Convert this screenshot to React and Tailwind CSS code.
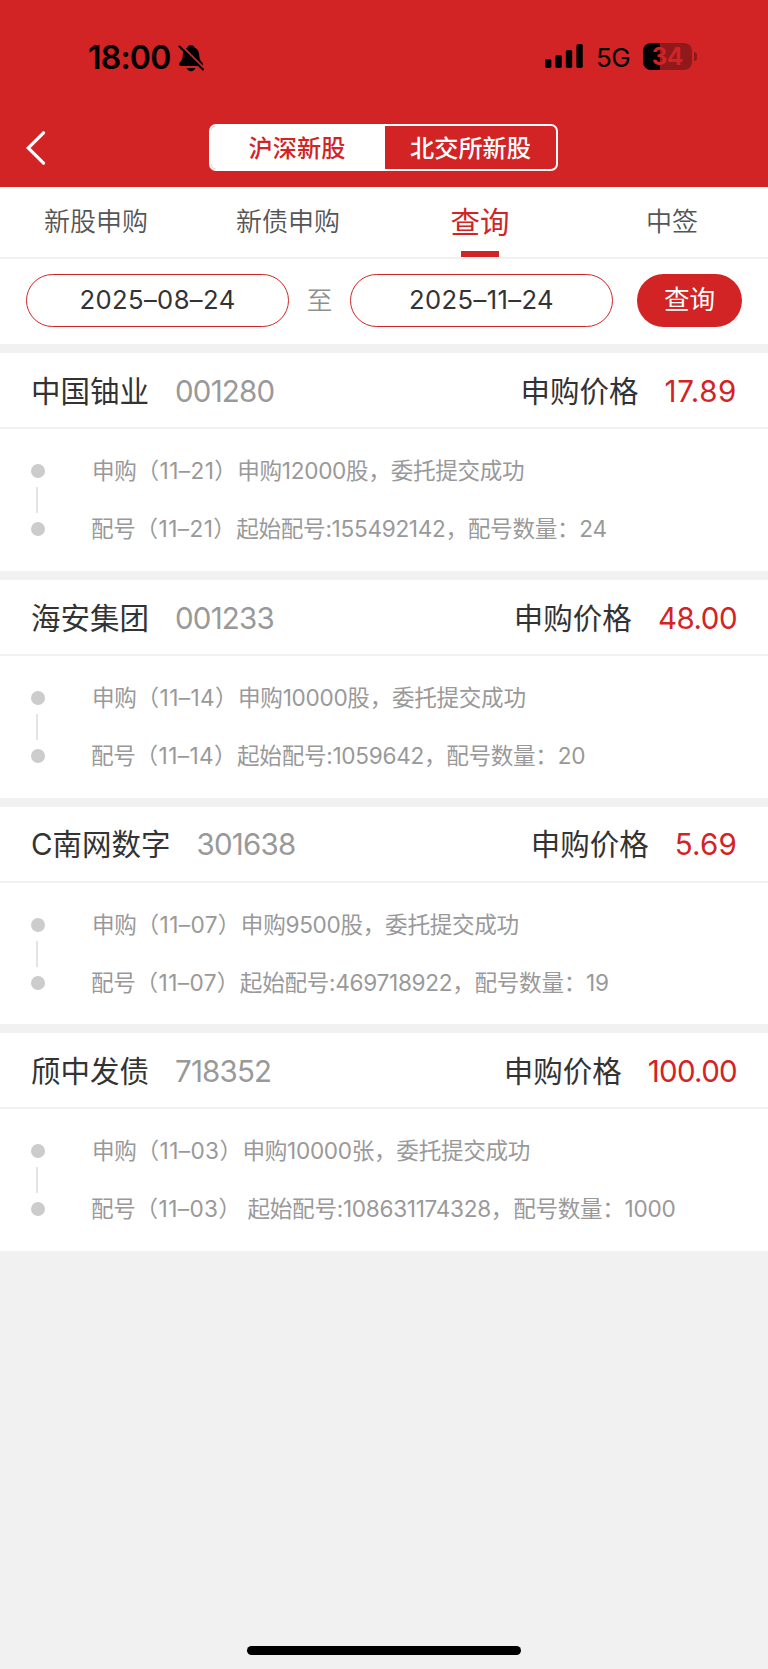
import React from 'react';

const tabs = ['新股申购', '新债申购', '查询', '中签'];

const records = [
  {
    name: '中国铀业',
    code: '001280',
    price: '17.89',
    priceSpacing: 'tracking-[0.6px]',
    date: '（11–21）',
    apply: '申购12000股，委托提交成功',
    allot: '起始配号:155492142，配号数量：24',
  },
  {
    name: '海安集团',
    code: '001233',
    price: '48.00',
    priceSpacing: 'tracking-[-0.5px]',
    date: '（11–14）',
    apply: '申购10000股，委托提交成功',
    allot: '起始配号:1059642，配号数量：20',
  },
  {
    name: 'C南网数字',
    code: '301638',
    price: '5.69',
    priceSpacing: 'tracking-[0.2px]',
    date: '（11–07）',
    apply: '申购9500股，委托提交成功',
    allot: '起始配号:469718922，配号数量：19',
  },
  {
    name: '颀中发债',
    code: '718352',
    price: '100.00',
    priceSpacing: 'tracking-[-0.7px]',
    date: '（11–03）',
    apply: '申购10000张，委托提交成功',
    allot: ' 起始配号:108631174328，配号数量：1000',
  },
];

const StatusBar = () => (
  <div className="flex h-[112px] items-center justify-between pl-[88px] pr-[71px] text-black">
    <div className="flex items-center gap-[8px] pt-[3px]">
      <span className="text-[32px] leading-none font-semibold tracking-[-0.8px]">18:00</span>
      <svg width="26" height="28" viewBox="0 0 26 28">
        <path d="M13 1c-1.800 0-3.100 1-3.500 2.500C6.200 4.800 5 7.600 4.800 11c-.2 4-1 5.500-3 7.600C.5 20 .9 22 2.800 22h20.400c1.900 0 2.300-2 1-3.400-2-2.100-2.800-3.600-3-7.600-.2-3.400-1.400-6.200-4.700-7.500C16.100 2 14.800 1 13 1z" />
        <path d="M8.600 24h8.800c-.6 2-2.300 3.200-4.400 3.200S9.200 26 8.600 24z" />
        <path d="M2.500.8l24 24" stroke="#d22325" strokeWidth="2.200" />
        <path d="M1.500 2.500l23.500 23" stroke="black" strokeWidth="2" strokeLinecap="round" />
      </svg>
    </div>
    <div className="flex items-center">
      <svg width="38" height="24" viewBox="0 0 38 24">
        <rect x="0" y="15" width="6.400" height="9" rx="1.800" />
        <rect x="10.400" y="11" width="6.400" height="13" rx="1.800" />
        <rect x="20.800" y="6" width="6.400" height="18" rx="1.800" />
        <rect x="31.400" y="0" width="6.400" height="24" rx="1.800" />
      </svg>
      <span className="ml-[13px] w-[47px] pt-[3px] text-[26px] leading-none tracking-[-0.6px]">5G</span>
      <div className="flex h-[27px] w-[49px] items-center justify-center rounded-[8px] bg-[linear-gradient(90deg,#000_17px,#8f191b_17px)]">
        <span className="pt-px text-[24px] leading-none font-bold text-[#d22325]">34</span>
      </div>
      <div className="ml-[2px] h-[9px] w-[3px] rounded-r-full bg-[#8f191b]" />
    </div>
  </div>
);

const NavBar = () => (
  <div className="flex h-[75px] items-start pt-[12px]">
    <button className="ml-[26px] flex h-[47px] w-[183px] items-center">
      <svg width="20" height="34" viewBox="0 0 20 34" fill="none" stroke="white" strokeWidth="3.200" strokeLinecap="round">
        <path d="M17.500 1.800L2.200 17l15.300 15.200" />
      </svg>
    </button>
    <div className="flex h-[47px] w-[349px] overflow-hidden rounded-[7px] border-2 border-white text-[24.2px] font-medium">
      <button className="w-[174px] bg-white pt-[4px] pr-[2px] text-[#d22325]">沪深新股</button>
      <button className="flex-1 pt-[4px] text-white">北交所新股</button>
    </div>
  </div>
);

const Record = ({ name, code, price, priceSpacing, date, apply, allot }) => (
  <section className="h-[217.800px] bg-white">
    <div className="flex h-[76px] items-center border-b-2 border-[#f1f1f1] px-[31px] pt-[2px] text-[29.500px] text-[#333]">
      <span>{name}</span>
      <span className="ml-[26px] tracking-[-0.8px] text-[#999]">{code}</span>
      <span className="ml-auto">申购价格</span>
      <span className={`ml-[26px] text-[#d22325] ${priceSpacing}`}>{price}</span>
    </div>
    <div className="flex pl-[31px] pt-[35px] text-[22.600px] tracking-[-0.3px] text-[#999]">
      <div className="flex w-[14px] flex-col items-center">
        <i className="h-[14px] w-[14px] rounded-full bg-[#ccc]" />
        <i className="my-[9px] mr-[2px] h-[26px] w-[2px] bg-[#e4e4e4]" />
        <i className="h-[14px] w-[14px] rounded-full bg-[#ccc]" />
      </div>
      <div className="-mt-[10px] ml-[46px] whitespace-pre">
        <p className="h-[58px] pl-px leading-[34px]">
          申购<span className="tracking-[0.4px]">{date}</span>{apply}
        </p>
        <p className="leading-[34px]">
          配号<span className="tracking-[0.4px]">{date}</span>{allot}
        </p>
      </div>
    </div>
  </section>
);

const App = () => {
  return (
    <div className="flex h-[1669px] w-[768px] flex-col bg-[#f1f1f1] font-['Inter','Noto_Sans_CJK_SC',sans-serif]">
      <header className="bg-[#d22325]">
        <StatusBar />
        <NavBar />
      </header>

      <nav className="flex h-[72px] border-b-2 border-[#f1f1f1] bg-white text-[26px] font-[350] text-[#555]">
        {tabs.map((tab) =>
          tab === '查询' ? (
            <button key={tab} className="flex flex-1 flex-col items-center justify-between text-[29.500px] font-normal text-[#d22325]">
              <span className="h-[64px] leading-[70px]">{tab}</span>
              <span className="h-[6px] w-[38px] bg-[#d22325]" />
            </button>
          ) : (
            <button key={tab} className="flex-1 pb-[2px]">{tab}</button>
          )
        )}
      </nav>

      <div className="flex h-[85px] items-start bg-white pl-[26px] pt-[15px] text-[25.600px] text-[#333]">
        <button className="h-[53px] w-[263px] rounded-full border border-[#d22325] tracking-[0.4px]">2025–08–24</button>
        <span className="w-[61px] text-center leading-[53px] font-[350] text-[#8f8f8f]">至</span>
        <button className="h-[53px] w-[263px] rounded-full border border-[#d22325] tracking-[0.4px]">2025–11–24</button>
        <button className="ml-[24px] h-[53px] w-[105px] rounded-full bg-[#d22325] text-white">查询</button>
      </div>

      <main className="mt-[9px] flex flex-col gap-[9px]">
        {records.map((record) => (
          <Record key={record.code} {...record} />
        ))}
      </main>

      <div className="mx-auto mt-auto mb-[14px] h-[9px] w-[274px] rounded-full bg-black" />
    </div>
  );
};

export default App;
